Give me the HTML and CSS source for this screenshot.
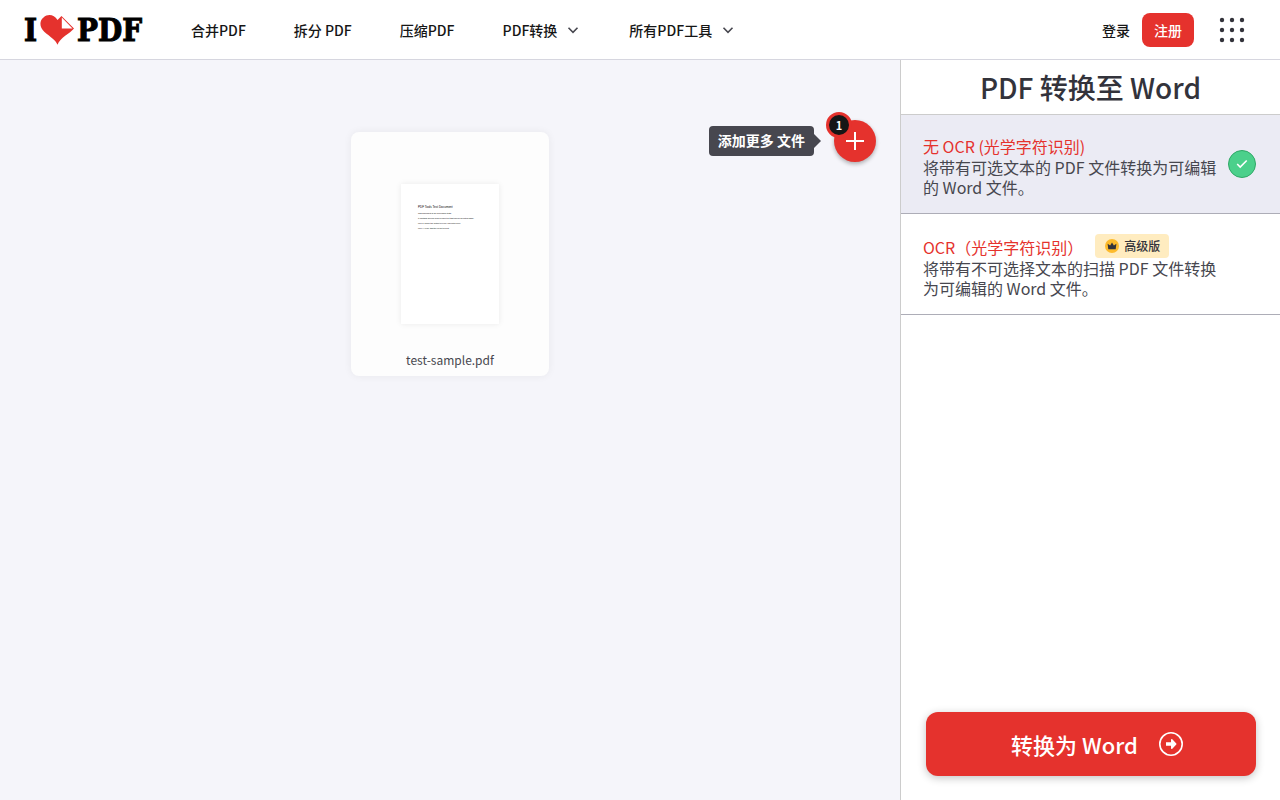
FILE: index.html
```html
<!DOCTYPE html>
<html lang="zh-CN">
<head>
<meta charset="utf-8">
<meta name="viewport" content="width=device-width, initial-scale=1">
<title>PDF 转换至 Word</title>
<link rel="stylesheet" href="styles.css">
</head>
<body>
<header class="header">
  <a class="brand" href="#" aria-label="I Love PDF">
    <span>I</span>
    <svg class="brand-heart" width="34" height="30" viewBox="0 0 34 30" aria-hidden="true">
      <path d="M17.500 29.800C16 25.500 10 21.500 4.500 17C-.5 12.500-1 6 3.500 2.500C8-1.500 14-.5 17.500 5L21.500 1L34 13.500C30 18.500 20 22.500 17.500 29.800Z" fill="#e5322d"/>
      <path d="M21.800 2.500V13.500H32.500Z" fill="#fff"/>
    </svg>
    <span>PDF</span>
  </a>
  <nav class="nav">
    <a href="#">合并PDF</a>
    <a href="#">拆分 PDF</a>
    <a href="#">压缩PDF</a>
    <a href="#" class="nav-drop">PDF转换
      <svg width="16" height="16" viewBox="0 0 16 16" aria-hidden="true"><path d="M3.500 5.800L8 10.300l4.500-4.500"/></svg></a>
    <a href="#" class="nav-drop">所有PDF工具
      <svg width="16" height="16" viewBox="0 0 16 16" aria-hidden="true"><path d="M3.500 5.800L8 10.300l4.500-4.500"/></svg></a>
  </nav>
  <div class="account">
    <a href="#">登录</a>
    <a class="signup" href="#">注册</a>
    <button class="apps" type="button" aria-label="菜单">
      <svg width="26" height="26" viewBox="0 0 26 26" fill="#33333b" aria-hidden="true">
        <circle cx="3" cy="3" r="2.200"/><circle cx="13" cy="3" r="2.200"/><circle cx="23" cy="3" r="2.200"/>
        <circle cx="3" cy="13" r="2.200"/><circle cx="13" cy="13" r="2.200"/><circle cx="23" cy="13" r="2.200"/>
        <circle cx="3" cy="23" r="2.200"/><circle cx="13" cy="23" r="2.200"/><circle cx="23" cy="23" r="2.200"/>
      </svg>
    </button>
  </div>
</header>
<div class="tool">
  <main class="workspace">
    <article class="file">
      <div class="preview">
        <div class="page" lang="en">
          <strong>PDF Tools Test Document</strong>
          <p>This document is for conversion tests.</p>
          <p>It contains several lines of plain text that can be selected again.</p>
          <p>Line 3: check the output of every converter here.</p>
          <p>Line 4: verify that the layout is kept.</p>
        </div>
      </div>
      <div class="file-name">test-sample.pdf</div>
    </article>
    <div class="add">
      <span class="tip" id="add-tip">添加更多 文件</span>
      <button class="add-btn" type="button" aria-labelledby="add-tip">
        <svg width="18" height="18" viewBox="0 0 18 18" aria-hidden="true"><path d="M9 0v18M0 9h18" stroke="#fff" stroke-width="2"/></svg>
        <span class="count">1</span>
      </button>
    </div>
  </main>
  <aside class="sidebar">
    <h1 class="title">PDF 转换至 Word</h1>
    <form class="form">
      <label class="option">
        <span class="option-text">
          <span class="option-head">无 OCR (光学字符识别)</span>
          <span class="option-desc">将带有可选文本的 PDF 文件转换为可编辑的 Word 文件。</span>
        </span>
        <span class="mark">
          <input type="radio" name="ocr" checked>
          <svg width="12" height="10" viewBox="0 0 12 10" aria-hidden="true"><path d="M1.200 5l3 3L10.700 1.500"/></svg>
        </span>
      </label>
      <label class="option">
        <span class="option-text">
          <span class="option-head">OCR（光学字符识别）
            <span class="premium">
              <svg width="14" height="14" viewBox="0 0 14 14" aria-hidden="true"><circle cx="7" cy="7" r="7" fill="#fdbb2d"/><path d="M3.300 10.300L2.600 4.800L5.100 6.400L7 3.500L8.900 6.400L11.400 4.800L10.700 10.300Z" fill="#33333b"/></svg>
              高级版</span></span>
          <span class="option-desc">将带有不可选择文本的扫描 PDF 文件转换为可编辑的 Word 文件。</span>
        </span>
        <span class="mark">
          <input type="radio" name="ocr">
          <svg width="12" height="10" viewBox="0 0 12 10" aria-hidden="true"><path d="M1.200 5l3 3L10.700 1.500"/></svg>
        </span>
      </label>
      <button class="convert" type="button">转换为 Word
        <svg width="24" height="24" viewBox="0 0 24 24" aria-hidden="true"><circle cx="12" cy="12" r="11.200" fill="none" stroke="#fff" stroke-width="1.600"/><path d="M7 10.300H12V7.500Q12.500 6.700 13.300 7.300L17.300 11.400Q17.700 12 17.300 12.600L13.300 16.700Q12.500 17.300 12 16.500V13.700H7Z" fill="#fff"/></svg>
      </button>
    </form>
  </aside>
</div>
</body>
</html>
```
FILE: styles.css
```css
* { box-sizing: border-box; }

body {
  margin: 0;
  min-height: 100vh;
  display: flex;
  flex-direction: column;
  font-family: "Noto Sans CJK SC", sans-serif;
  color: #161616;
  background: #fff;
}

a { color: inherit; text-decoration: none; }
button { font: inherit; border: 0; padding: 0; cursor: pointer; }
p { margin: 0; }

/* Header */
.header {
  display: flex;
  align-items: center;
  height: 60px;
  padding: 0 35px 0 24px;
  border-bottom: 1px solid #d6d6df;
  font-size: 14px;
  font-weight: 500;
  line-height: 20px;
}
.brand {
  display: flex;
  align-items: center;
  gap: 3px;
  font-family: "DejaVu Serif Condensed", "DejaVu Serif", serif;
  font-size: 31px;
  font-weight: 700;
  line-height: 32px;
  color: #000;
  -webkit-text-stroke: 1px #000;
}
.nav {
  display: flex;
  gap: 48px;
  margin-left: 49px;
  white-space: nowrap;
}
.nav-drop {
  display: flex;
  align-items: center;
  gap: 8px;
}
.nav-drop svg, .mark svg {
  fill: none;
  stroke: #47474f;
  stroke-width: 1.6;
}
.account {
  display: flex;
  align-items: center;
  gap: 12px;
  margin-left: auto;
}
.signup {
  padding: 7px 12px;
  border-radius: 8px;
  background: #e5322d;
  color: #fff;
}
.apps {
  display: flex;
  margin-left: 13px;
  background: none;
}

/* Tool layout */
.tool {
  flex: 1;
  display: grid;
  grid-template-columns: 1fr 380px;
}
.workspace {
  position: relative;
  display: flex;
  justify-content: center;
  align-items: flex-start;
  padding: 72px 24px;
  background: #f5f5fa;
}
.file {
  width: 198px;
  padding: 52px 8px 6px;
  border-radius: 8px;
  background: #fdfdfd;
  box-shadow: 0 0 8px rgba(0, 0, 0, .06);
}
.preview {
  display: flex;
  justify-content: center;
}
.page {
  width: 98px;
  aspect-ratio: 7 / 10;
  padding: 20px 0 0 17px;
  background: #fff;
  box-shadow: 0 0 6px rgba(0, 0, 0, .08);
  font-family: "Liberation Sans", sans-serif;
  font-size: 2px;
  line-height: 5px;
  color: #000;
  white-space: nowrap;
}
.page strong {
  display: block;
  font-size: 3px;
  font-weight: 400;
  line-height: 6px;
  margin-bottom: 1px;
}
.file-name {
  margin-top: 26px;
  font-size: 12px;
  line-height: 20px;
  text-align: center;
  color: #47474f;
}

/* Floating add control */
.add {
  position: absolute;
  top: 60px;
  right: 24px;
  display: flex;
  align-items: center;
  gap: 20px;
}
.tip {
  position: relative;
  padding: 4px 9px 6px;
  border-radius: 4px;
  background: #47474f;
  color: #fff;
  font-size: 14px;
  font-weight: 700;
  line-height: 20px;
}
.tip::after {
  content: "";
  position: absolute;
  left: 100%;
  top: 8px;
  border: 7px solid transparent;
  border-right-width: 0;
  border-left-color: #47474f;
}
.add-btn {
  position: relative;
  display: grid;
  place-items: center;
  width: 42px;
  height: 42px;
  border-radius: 50%;
  background: #e5322d;
  box-shadow: 0 2px 4px rgba(0, 0, 0, .3);
}
.count {
  position: absolute;
  top: -8px;
  left: -8px;
  width: 26px;
  height: 26px;
  border: 3px solid #e5322d;
  border-radius: 50%;
  background: #161616;
  color: #fff;
  font-size: 11px;
  font-weight: 700;
  line-height: 20px;
}

/* Sidebar */
.sidebar {
  display: flex;
  flex-direction: column;
  border-left: 1px solid #ccc;
}
.title {
  margin: 0;
  padding: 7px 0;
  border-bottom: 1px solid #ccc;
  font-size: 28px;
  font-weight: 500;
  line-height: 40px;
  text-align: center;
  color: #33333b;
}
.form {
  flex: 1;
  display: flex;
  flex-direction: column;
}
.option {
  display: flex;
  align-items: center;
  gap: 6px;
  padding: 0 24px 0 22px;
  border-bottom: 1px solid #adadb7;
  font-size: 16px;
  line-height: 20px;
  color: #47474f;
}
.option:has(input:checked) { background: #ebebf4; }
.option-text {
  flex: 1;
  padding: 20px 0 16px;
}
.option-head {
  display: flex;
  align-items: flex-end;
  gap: 12px;
  line-height: 22px;
  color: #e5322d;
}
.option-desc { display: block; }
.premium {
  display: flex;
  align-items: center;
  gap: 5px;
  padding: 0 9px 0 10px;
  border-radius: 4px;
  background: #ffecc0;
  color: #33333b;
  font-size: 12px;
  font-weight: 500;
  line-height: 24px;
}
.mark { display: grid; place-items: center; }
.mark input, .mark svg { grid-area: 1 / 1; }
.mark input {
  appearance: none;
  width: 28px;
  height: 28px;
  margin: 0;
  border-radius: 50%;
}
.mark input:checked {
  border: 1px solid #2fa866;
  background: #4bd08b;
}
.mark svg { visibility: hidden; stroke: #fff; }
.mark input:checked + svg { visibility: visible; }
.convert {
  display: flex;
  align-items: center;
  justify-content: center;
  gap: 21px;
  height: 64px;
  margin: auto 24px 24px 25px;
  padding-left: 12px;
  border-radius: 12px;
  background: #e5322d;
  box-shadow: 0 2px 8px rgba(0, 0, 0, .24);
  color: #fff;
  font-size: 22px;
  font-weight: 500;
}
```
